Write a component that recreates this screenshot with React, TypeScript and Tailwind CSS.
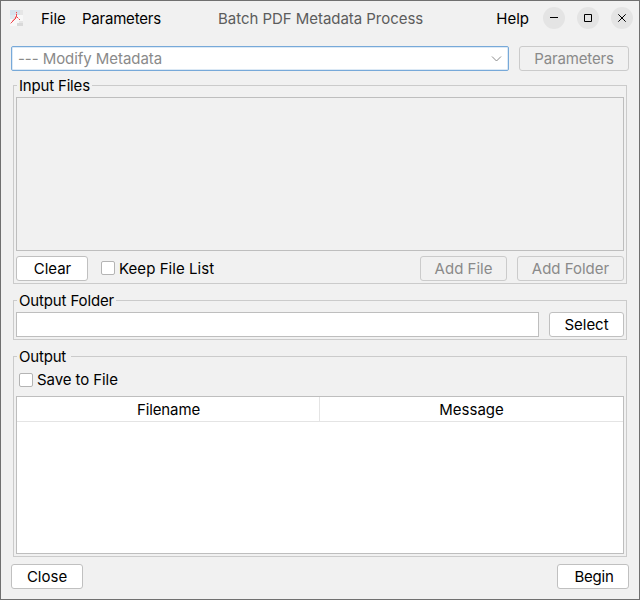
import type { ReactNode } from "react";
import clsx from "clsx";

function Button({
  children,
  className,
  disabled,
}: {
  children: ReactNode;
  className?: string;
  disabled?: boolean;
}) {
  return (
    <button
      disabled={disabled}
      className={clsx(
        "flex h-[25px] shrink-0 items-center justify-center rounded-[3px] border whitespace-nowrap",
        disabled
          ? "border-[#cbcbcb] bg-[#f1f1f1] text-[#8a8a8a]"
          : "border-[#c0c0c0] bg-white text-black",
        className,
      )}
    >
      {children}
    </button>
  );
}

function CheckBox({ label, className }: { label: string; className?: string }) {
  return (
    <label className={clsx("flex items-center gap-1 whitespace-nowrap", className)}>
      <span className="mb-px size-3.5 rounded-[2px] border border-[#b4b4b4] bg-white" />
      <span>{label}</span>
    </label>
  );
}

function Group({
  title,
  titleClass,
  className,
  children,
}: {
  title: string;
  titleClass: string;
  className?: string;
  children: ReactNode;
}) {
  return (
    <section
      className={clsx("relative flex flex-col border border-[#cbcbcb] px-0.5", className)}
    >
      <h2
        className={clsx(
          "absolute -top-2.5 left-[3px] h-5 bg-[#f1f1f1] pl-0.5 leading-5 whitespace-nowrap",
          titleClass,
        )}
      >
        {title}
      </h2>
      {children}
    </section>
  );
}

function AppIcon() {
  return (
    <svg
      className="-ml-px"
      width="13"
      height="16"
      viewBox="0 0 13 16"
      shapeRendering="crispEdges"
    >
      <rect width="13" height="16" fill="#f8f8f8" />
      <rect width="10" height="5" fill="#d5e2ec" />
      <rect y="5" width="5" height="4" fill="#dfe8ef" />
      <rect x="10" width="3" height="5" fill="#e6e6e6" />
      <rect x="7" y="13" width="6" height="3" fill="#d9d9d9" />
      <rect x="9" y="11" width="4" height="2" fill="#e6e6e6" />
      <path
        d="M6 3h1v1h-1zM5 6h1v1h-1zM6 7h1v1h-1zM4 8h1v1h-1zM3 9h1v1h-1zM2 10h1v1h-1zM8 8h1v1h-1zM0 13h1v1h-1z"
        fill="#f7b5b8"
      />
      <path
        d="M6 2h1v1h-1zM6 4h1v3h-1zM5 7h1v2h-1zM4 9h1v1h-1zM3 10h1v1h-1zM2 11h1v1h-1zM1 12h1v1h-1zM7 7h1v1h-1zM9 9h1v1h-1z"
        fill="#ee4850"
      />
    </svg>
  );
}

function WindowButton({ children }: { children: ReactNode }) {
  return (
    <button className="flex size-[22px] items-center justify-center rounded-full bg-[#e4e4e4]">
      <svg
        width="10"
        height="10"
        viewBox="0 0 10 10"
        fill="none"
        stroke="#000"
      >
        {children}
      </svg>
    </button>
  );
}

export default function App() {
  return (
    <div className="flex h-[600px] w-[640px] flex-col border border-[#707070] bg-[#f1f1f1] px-2.5 font-[Inter,sans-serif] text-[15px] leading-5 text-black">
      <header className="flex h-[34px] shrink-0 items-center whitespace-nowrap">
        <AppIcon />
        <nav className="ml-[18px] flex w-[177px] gap-[17px] pt-0.5">
          <span>File</span>
          <span className="-ml-px tracking-[-0.2px]">Parameters</span>
        </nav>
        <h1 className="pt-0.5 tracking-[-0.04px] text-[#5c5c5c]">Batch PDF Metadata Process</h1>
        <div className="ml-auto flex items-center">
          <span className="mr-3.5 pt-0.5">Help</span>
          <div className="mr-[-4px] flex gap-3">
            <WindowButton>
              <path d="M1 4.5h8" />
            </WindowButton>
            <WindowButton>
              <path d="M1.5 1.5h7v7h-7z" />
            </WindowButton>
            <WindowButton>
              <path d="M1.3 1.3l7.4 7.4M8.7 1.3l-7.4 7.4" />
            </WindowButton>
          </div>
        </div>
      </header>

      <div className="mt-[11px] flex shrink-0 gap-2.5">
        <div className="flex h-[25px] flex-1 items-center justify-between rounded-[2px] border border-[#77a9d9] bg-white pr-1.5 pl-1.5 text-[#8a8a8a] shadow-[inset_0_0_0_1px_#dce9f5]">
          <span className="pt-px tracking-[-0.06px]">--- Modify Metadata</span>
          <svg width="11" height="6" viewBox="0 0 11 6" fill="none" stroke="#8a8a8a">
            <path d="M1 .5l4.5 4.5L10 .5" />
          </svg>
        </div>
        <Button disabled className="w-[110px] tracking-[-0.15px]">
          Parameters
        </Button>
      </div>

      <Group
        title="Input Files"
        titleClass="w-[75px] tracking-[-0.18px]"
        className="mx-0.5 mt-3.5 h-[199px] shrink-0"
      >
        <div className="mt-[11px] h-[154px] border border-[#bebebe]" />
        <div className="mt-[5px] flex items-center">
          <Button className="mr-[13px] w-[72px] pl-px">Clear</Button>
          <CheckBox label="Keep File List" className="tracking-[0.06px]" />
          <div className="ml-auto flex gap-2.5">
            <Button disabled className="w-[87px]">
              Add File
            </Button>
            <Button disabled className="w-[107px]">
              Add Folder
            </Button>
          </div>
        </div>
      </Group>

      <Group
        title="Output Folder"
        titleClass="w-[99px] tracking-[-0.14px]"
        className="mx-0.5 mt-4 h-10 shrink-0"
      >
        <div className="mt-[11px] flex gap-2.5">
          <div className="h-[25px] flex-1 border border-[#bebebe] bg-white" />
          <Button className="w-[75px]">Select</Button>
        </div>
      </Group>

      <Group
        title="Output"
        titleClass="w-[54px] tracking-[-0.2px]"
        className="mx-0.5 mt-4 h-[201px] shrink-0"
      >
        <div className="mt-[13px] ml-[3px]">
          <CheckBox label="Save to File" className="tracking-[-0.08px]" />
        </div>
        <div className="mt-1.5 h-[158px] border border-[#bebebe] bg-white">
          <div className="flex h-[25px] items-center border-b border-[#e4e4e4] text-center">
            <div className="h-full w-[303px] border-r border-[#e4e4e4] pl-px leading-[25px] tracking-[-0.12px]">
              Filename
            </div>
            <div className="h-full flex-1 leading-[25px]">Message</div>
          </div>
        </div>
      </Group>

      <footer className="mt-[7px] flex justify-between">
        <Button className="w-[72px]">Close</Button>
        <Button className="w-[72px] pl-0.5 tracking-[-0.25px]">Begin</Button>
      </footer>
    </div>
  );
}
